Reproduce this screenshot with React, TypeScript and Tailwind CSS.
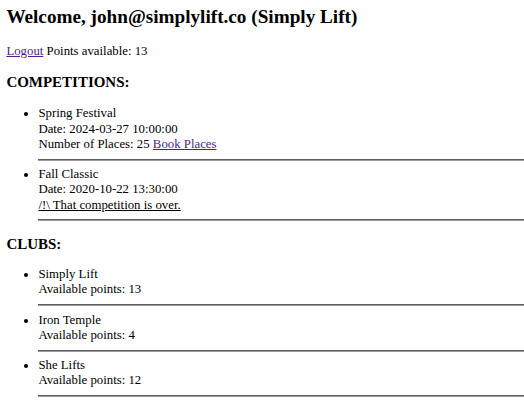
import React from 'react';

type Competition = { name: string; date: string; places: number; over: boolean };
type Club = { name: string; points: number };

const COMPETITIONS: Competition[] = [
  { name: 'Spring Festival', date: '2024-03-27 10:00:00', places: 25, over: false },
  { name: 'Fall Classic', date: '2020-10-22 13:30:00', places: 13, over: true },
];

const CLUBS: Club[] = [
  { name: 'Simply Lift', points: 13 },
  { name: 'Iron Temple', points: 4 },
  { name: 'She Lifts', points: 12 },
];

const Rule = () => (
  <hr className="my-[6.4px] border-0 border-t border-b border-t-[#5e5e5e] border-b-[#9a9a9a]" />
);

export default function App() {
  return (
    <div className="min-h-screen bg-white pl-[6.4px] pt-[6.4px] font-['Liberation_Serif','Times_New_Roman',serif] text-[12.8px] leading-[1.15] text-black">
      <h2 className="mb-[15.9px] text-[19.2px] font-bold">Welcome, john@simplylift.co (Simply Lift)</h2>
      <p className="mb-[12.8px]">
        <a href="#" className="text-[#551a8b] underline">Logout</a> Points available: 13
      </p>

      <h3 className="my-[14.98px] text-[14.98px] font-bold">COMPETITIONS:</h3>
      <ul className="my-[12.8px] list-disc pl-[32px] leading-[1.2]">
        {COMPETITIONS.map((c) => (
          <li key={c.name}>
            {c.name}
            <br />
            Date: {c.date}
            <br />
            {c.over ? (
              <span className="underline">/!\ That competition is over.</span>
            ) : (
              <>
                Number of Places: {c.places}{' '}
                <a href="#" className="text-[#551a8b] underline">Book Places</a>
              </>
            )}
            <Rule />
          </li>
        ))}
      </ul>

      <h3 className="mt-[14.98px] mb-[13.5px] text-[14.98px] font-bold">CLUBS:</h3>
      <ul className="mt-[12px] mb-[12.8px] list-disc pl-[32px] leading-[1.2]">
        {CLUBS.map((c) => (
          <li key={c.name}>
            {c.name}
            <br />
            Available points: {c.points}
            <Rule />
          </li>
        ))}
      </ul>
    </div>
  );
}
